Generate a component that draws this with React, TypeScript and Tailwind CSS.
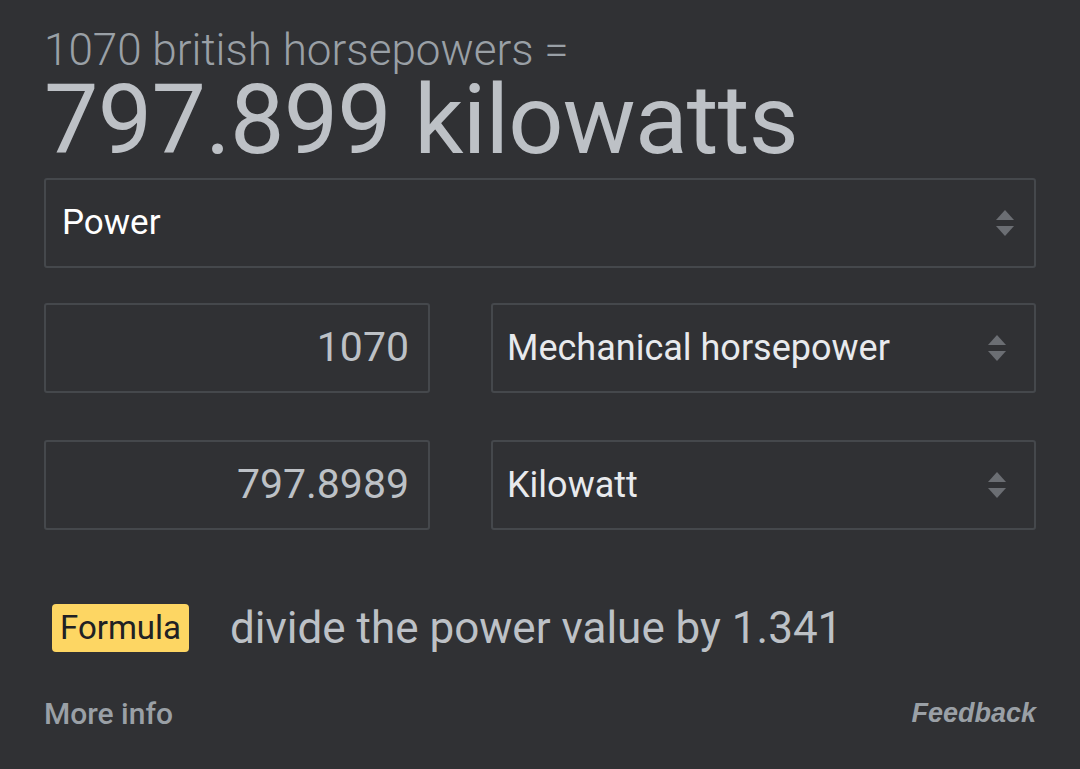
import { ReactNode } from "react";

const font = { fontFamily: "Roboto, 'Liberation Sans', sans-serif" };

function Arrows() {
  return (
    <svg width="22" height="30" viewBox="0 0 22 30" className="shrink-0">
      <path d="M11 2 L20 12 L2 12 Z" fill="#6b6e73" />
      <path d="M11 28 L20 18 L2 18 Z" fill="#6b6e73" />
    </svg>
  );
}

function Box({
  children,
  className = "",
}: {
  children: ReactNode;
  className?: string;
}) {
  return (
    <div
      className={`flex h-[90px] items-center rounded-[3px] border-2 border-[#45484c] ${className}`}
    >
      {children}
    </div>
  );
}

export default function App() {
  return (
    <div
      className="h-[769px] w-[1080px] overflow-hidden bg-[#303134] px-[44px]"
      style={font}
    >
      <div className="pt-[26px] text-[44px] font-light leading-[48px] text-[#9aa0a6]">
        1070 british horsepowers =
      </div>
      <div className="text-[97px] leading-[92px] tracking-[-0.8px] text-[#bdc1c6]">
        797.899 kilowatts
      </div>

      <Box className="mt-[12px] h-[87px] justify-between pl-[16px] pr-[18px]">
        <span className="text-[35px] text-white">Power</span>
        <Arrows />
      </Box>

      <div className="mt-[35px] flex flex-col gap-[47px]">
        {[
          ["1070", "Mechanical horsepower"],
          ["797.8989", "Kilowatt"],
        ].map(([value, unit]) => (
          <div key={unit} className="flex gap-[61px]">
            <Box className="w-[386px] justify-end pr-[19px]">
              <span className="text-[41px] text-[#bdc1c6]">{value}</span>
            </Box>
            <Box className="flex-1 justify-between pl-[14px] pr-[26px]">
              <span className="text-[36px] text-[#e8eaed]">{unit}</span>
              <Arrows />
            </Box>
          </div>
        ))}
      </div>

      <div className="mt-[74px] flex items-center pl-[8px]">
        <span className="rounded-[4px] bg-[#fdd663] px-[8px] text-[33px] leading-[48px] text-[#202124]">
          Formula
        </span>
        <span className="ml-[41px] text-[44px] leading-[48px] text-[#bdc1c6]">
          divide the power value by 1.341
        </span>
      </div>

      <div className="mt-[39px] flex items-center justify-between">
        <span className="text-[30px] font-medium text-[#9aa0a6]">
          More info
        </span>
        <span
          className="text-[27px] font-bold italic text-[#9aa0a6]"
          style={{ fontFamily: "'Liberation Sans', Arial, sans-serif" }}
        >
          Feedback
        </span>
      </div>
    </div>
  );
}
